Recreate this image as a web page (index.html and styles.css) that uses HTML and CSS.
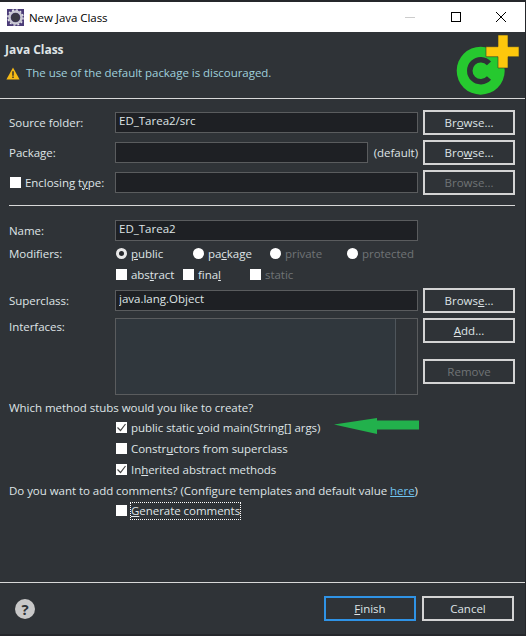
FILE: index.html
```html
<!DOCTYPE html>
<html lang="en">
<head>
    <meta charset="UTF-8">
    <meta name="viewport" content="width=device-width, initial-scale=1.0">
    <title>New Java Class</title>
    <link rel="stylesheet" href="styles.css">
</head>
<body>
<div class="window">
    <!-- Title bar -->
    <div class="titlebar">
        <svg class="app-icon" width="17" height="17" viewBox="0 0 17 17">
            <rect width="17" height="17" fill="#4b3c78"/>
            <circle cx="8.5" cy="8.5" r="6" fill="none" stroke="#c9c9d2" stroke-width="2.4"/>
            <circle cx="8.5" cy="8.5" r="7.6" fill="none" stroke="#e4e4ea" stroke-width="1.4" stroke-dasharray="2 2"/>
            <circle cx="8.5" cy="8.5" r="4.4" fill="#3a3a44"/>
        </svg>
        <span class="title-text">New Java Class</span>
        <div class="win-buttons">
            <span class="win-btn"><svg width="12" height="12" viewBox="0 0 12 12"><path d="M1 6.5h10" stroke="#ccc" stroke-width="1"/></svg></span>
            <span class="win-btn"><svg width="12" height="12" viewBox="0 0 12 12"><rect x="1.5" y="1.5" width="9" height="9" fill="none" stroke="#000" stroke-width="1"/></svg></span>
            <span class="win-btn"><svg width="12" height="12" viewBox="0 0 12 12"><path d="M1 1l10 10M11 1L1 11" stroke="#000" stroke-width="1"/></svg></span>
        </div>
    </div>

    <!-- Wizard header -->
    <div class="header">
        <div class="header-text">
            <div class="page-title">Java Class</div>
            <div class="message">
                <svg width="14" height="13" viewBox="0 0 14 13">
                    <path d="M7 .5L13.6 12.5H.4z" fill="#f5b915"/>
                    <path d="M6.3 4.2h1.4v4.6H6.3zM6.3 9.6h1.4v1.5H6.3z" fill="#2b2b2b"/>
                </svg>
                <span>The use of the default package is discouraged.</span>
            </div>
        </div>
        <svg class="logo" width="64" height="66" viewBox="0 0 64 66">
            <circle cx="24.7" cy="38.7" r="24" fill="#26c92f"/>
            <path d="M33 46A11 11 0 1 1 33 31.4" fill="none" stroke="#2e3236" stroke-width="5.5"/>
            <path d="M42 3h10v11.7h11v10H52V36H42V24.7H30v-10h12z" fill="#fdc70c" stroke="#3a3a2a" stroke-width=".6" stroke-linejoin="round"/>
        </svg>
    </div>
    <div class="sep"></div>

    <!-- Form -->
    <div class="form">
        <div class="row">
            <label class="label">Source folder:</label>
            <input class="field" type="text" value="ED_Tarea2/src" readonly>
            <button class="btn">Br<u>o</u>wse...</button>
        </div>
        <div class="row">
            <label class="label">Package:</label>
            <input class="field" type="text" readonly>
            <span class="hint">(default)</span>
            <button class="btn">Bro<u>w</u>se...</button>
        </div>
        <div class="row">
            <label class="label label-check"><span class="check"></span><span>Enclosing t<u>y</u>pe:</span></label>
            <input class="field" type="text" readonly>
            <button class="btn" disabled>Browse...</button>
        </div>
        <div class="sep sep-inner"></div>

        <div class="row row-short">
            <label class="label">Name:</label>
            <input class="field field-name" type="text" value="ED_Tarea2" readonly>
        </div>
        <div class="row row-options">
            <label class="label">Modifiers:</label>
            <span class="option opt-public"><span class="radio radio-on"></span><span><u>p</u>ublic</span></span>
            <span class="option opt-package"><span class="radio"></span><span>pa<u>c</u>kage</span></span>
            <span class="option opt-private off"><span class="radio"></span><span>private</span></span>
            <span class="option off"><span class="radio"></span><span>protected</span></span>
        </div>
        <div class="row row-options row-flags">
            <span class="option opt-abstract"><span class="check"></span><span>abs<u>t</u>ract</span></span>
            <span class="option opt-final"><span class="check"></span><span>fina<u>l</u></span></span>
            <span class="option off"><span class="check"></span><span>static</span></span>
        </div>
        <div class="row row-super">
            <label class="label">Superclass:</label>
            <input class="field" type="text" value="java.lang.Object" readonly>
            <button class="btn">Brows<u>e</u>...</button>
        </div>
        <div class="row row-interfaces">
            <label class="label">Interfaces:</label>
            <div class="list"><div class="list-scroll"></div></div>
            <div class="btn-stack">
                <button class="btn"><u>A</u>dd...</button>
                <button class="btn" disabled>Remove</button>
            </div>
        </div>

        <div class="text-line line-stubs">Which method stubs would you like to create?</div>
        <div class="opt-line"><span class="option"><span class="check checked"><svg width="11" height="11" viewBox="0 0 11 11"><path d="M1.5 5.5l3 3 5-6.5" fill="none" stroke="#444" stroke-width="1.2"/></svg></span><span>public static <u>v</u>oid main(String[] args)</span></span>
            <svg class="arrow" width="85" height="16" viewBox="0 0 85 16"><path d="M0 6.5L43 0v2.5H85v9H43V16z" fill="#22b14c"/></svg>
        </div>
        <div class="opt-line"><span class="option"><span class="check"></span><span>Constr<u>u</u>ctors from superclass</span></span></div>
        <div class="opt-line"><span class="option"><span class="check checked"><svg width="11" height="11" viewBox="0 0 11 11"><path d="M1.5 5.5l3 3 5-6.5" fill="none" stroke="#444" stroke-width="1.2"/></svg></span><span>In<u>h</u>erited abstract methods</span></span></div>
        <div class="text-line">Do you want to add comments? (Configure templates and default value <a class="link" href="#">here</a>)</div>
        <div class="opt-line opt-generate"><span class="option"><span class="check"></span><span class="focused"><u>G</u>enerate comments</span></span></div>
    </div>

    <!-- Footer -->
    <div class="sep sep-footer"></div>
    <div class="footer">
        <span class="help">?</span>
        <button class="btn btn-default"><u>F</u>inish</button>
        <button class="btn btn-cancel">Cancel</button>
    </div>
</div>
</body>
</html>
```
FILE: styles.css
```css
* {
    box-sizing: border-box;
}

body {
    margin: 0;
    font-family: "Open Sans", "Noto Sans", Arial, sans-serif;
    font-size: 11.5px;
    letter-spacing: -.04px;
    color: #dfe4e6;
    background-color: #1f2125;
}

.window {
    display: flex;
    flex-direction: column;
    width: 526px;
    height: 636px;
    padding-top: 2px;
    padding-right: 1px;
    padding-bottom: 2px;
    background-color: #25272b;
}

/* Title bar */
.titlebar {
    display: flex;
    align-items: center;
    height: 30px;
    padding-left: 7px;
    background-color: #fff;
    color: #000;
}

.title-text {
    margin-left: 5px;
    font-size: 11.5px;
}

.win-buttons {
    display: flex;
    margin-left: auto;
    padding-right: 1px;
}

.win-btn {
    display: flex;
    width: 45.5px;
    justify-content: center;
}

/* Wizard header */
.header {
    display: flex;
    justify-content: space-between;
    height: 66px;
    padding-right: 5px;
    background-color: #2f3337;
}

.header-text {
    padding: 9px 0 0 5px;
}

.page-title {
    font-weight: 700;
    font-size: 12px;
    line-height: 17px;
}

.message {
    display: flex;
    align-items: center;
    gap: 6px;
    margin-top: 7px;
    padding-left: 1px;
    line-height: 16px;
    color: #9fd0dc;
}

.sep {
    flex-shrink: 0;
    height: 1px;
    background-color: #d8d8d8;
}

.sep-inner {
    margin: 5px 0 14px;
}

.sep-footer {
    margin-top: auto;
}

/* Form */
.form {
    flex: 1;
    display: flex;
    flex-direction: column;
    padding: 11px 10px 0 9px;
    background-color: #2f3337;
}

.row {
    display: flex;
    align-items: center;
    flex-shrink: 0;
    height: 25px;
    margin-bottom: 5px;
}

.row-short {
    height: 21px;
    margin-bottom: 2px;
}

.row-options {
    height: 20px;
    margin-bottom: 1px;
}

.row-flags {
    margin-bottom: 4px;
    padding-left: 106px;
}

.row-super {
    margin-bottom: 5px;
}

.row-interfaces {
    align-items: flex-start;
    height: 77px;
    margin-bottom: 3px;
}

.label {
    flex-shrink: 0;
    width: 106px;
}

.row-interfaces .label {
    padding-top: 1px;
}

.label-check {
    display: flex;
    align-items: center;
    gap: 4px;
    padding-left: 1px;
}

.field {
    flex: 1;
    min-width: 0;
    height: 21px;
    padding: 0 0 5px 3px;
    border: 1px solid #5a5c5e;
    background-color: #1e2024;
    color: #dfe4e6;
    font: inherit;
}

.field-name {
    flex: none;
    width: 303px;
}

.hint {
    margin-left: 6px;
}

.btn {
    flex-shrink: 0;
    width: 92px;
    height: 25px;
    margin-left: 5px;
    padding: 0;
    border: 2px solid #d4d4d4;
    background-color: #2f3337;
    color: #dfe4e6;
    font: inherit;
}

.btn:disabled {
    color: #6f7376;
}

.btn-stack {
    display: flex;
    flex-direction: column;
    gap: 16px;
}

.list {
    display: flex;
    justify-content: flex-end;
    flex: 1;
    height: 77px;
    border: 1px solid #5a5c5e;
    background-color: #30373d;
}

.list-scroll {
    width: 22px;
    border-left: 1px solid #4e555b;
    background-color: #2f3337;
}

/* Radios and checks */
.option {
    display: inline-flex;
    align-items: center;
    gap: 4px;
}

.off {
    color: #6f7376;
}

.opt-public {
    width: 78px;
    padding-left: 1px;
}

.opt-package {
    width: 77px;
}

.opt-private {
    width: 77px;
}

.opt-abstract {
    width: 68px;
    padding-left: 1px;
}

.opt-final {
    width: 67px;
}

.radio {
    flex-shrink: 0;
    width: 11px;
    height: 11px;
    border-radius: 50%;
    background-color: #fff;
}

.radio-on {
    border: 3px solid #e8e8e8;
    background-color: #25272b;
}

.check {
    display: block;
    flex-shrink: 0;
    width: 11px;
    height: 11px;
    background-color: #fff;
}

.check svg {
    display: block;
}

.text-line {
    height: 21px;
    line-height: 21px;
    white-space: nowrap;
}

.line-stubs {
    height: 20px;
    margin-bottom: -1px;
    line-height: 20px;
}

.opt-line {
    display: flex;
    align-items: center;
    height: 21px;
    padding-left: 107px;
}

.opt-generate {
    margin-top: -1px;
}

.arrow {
    margin-left: 14px;
    margin-bottom: 3px;
}

.focused {
    padding: 0 0 1px;
    outline: 1px dotted #fff;
}

.link {
    color: #6fc3f0;
}

/* Footer */
.footer {
    display: flex;
    align-items: center;
    height: 51px;
    padding-right: 11px;
    background-color: #2f3337;
}

.help {
    width: 20px;
    height: 20px;
    margin-left: 15px;
    margin-right: auto;
    border-radius: 50%;
    background-color: #c8c8c8;
    color: #2f3337;
    font-weight: 700;
    font-size: 15px;
    line-height: 20px;
    text-align: center;
}

.btn-default {
    border-color: #2f93e6;
}

.btn-cancel {
    margin-left: 6px;
}
```
